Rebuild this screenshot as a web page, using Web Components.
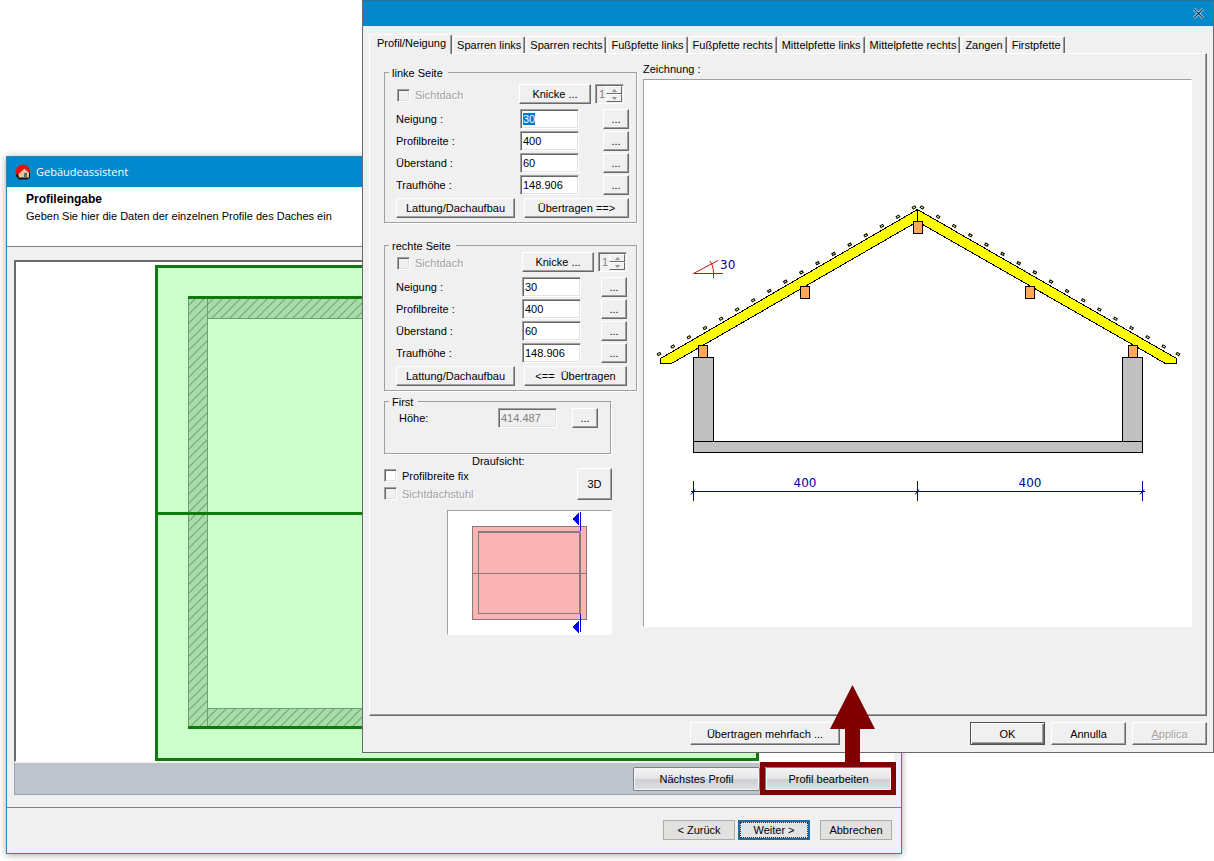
<!DOCTYPE html>
<html lang="de">
<head>
<meta charset="utf-8">
<title>Gebäudeassistent</title>
<style>
  body { margin: 0; background: #fff; font: 11px/14px "Liberation Sans", Arial, sans-serif; color: #000; }
</style>
</head>
<body>
<desktop-scene></desktop-scene>

<script>
const define = (name, html, setup) => {
  const template = document.createElement('template');
  template.innerHTML = html;
  customElements.define(name, class extends HTMLElement {
    constructor() {
      super();
      this.attachShadow({ mode: 'open' });
    }
    connectedCallback() {
      if (this.shadowRoot.childNodes.length) return;
      this.shadowRoot.append(template.content.cloneNode(true));
      if (setup) setup(this, this.shadowRoot);
    }
  });
};

/* Raised push button; kinds: primary, glossy, flat, focus */
define('push-button', `
<style>
  :host { display: block; height: 20px; }
  button { box-sizing: border-box; width: 100%; height: 100%; margin: 0; padding: 0; font: inherit; color: #000; white-space: pre;
    background: #f0f0f0; border: 1px solid; border-color: #fff #696969 #696969 #fff; box-shadow: inset -1px -1px #a0a0a0; border-radius: 0; outline: none; }
  button:disabled { color: #a0a0a0; text-shadow: 1px 1px #fff; }
  :host([kind=primary]) button { border: 1px solid #505050; box-shadow: inset 1px 1px #fff, inset -1px -1px #696969, inset -2px -2px #a0a0a0; }
  :host([kind=glossy]) button { border: 1px solid #7d8187; border-radius: 2px; box-shadow: inset 0 0 0 1px #f4f5f7;
    background: linear-gradient(#f4f4f5, #e4e5e7 48%, #cdcfd4 52%, #dfe1e5); }
  :host([kind=flat]) button { background: #e1e1df; border-color: #adada5; box-shadow: none; }
  :host([kind=focus]) button { background: #e1e3e4; border: 2px solid #22699c; box-shadow: none; outline: 1px dotted #223; outline-offset: -3px; }
</style>
<button type="button"><slot></slot></button>`,
(host, root) => {
  const button = root.querySelector('button');
  button.disabled = host.hasAttribute('disabled');
});

define('check-item', `
<style>
  :host { display: block; }
  label { display: flex; align-items: center; gap: 5px; height: 13px; }
  input { appearance: none; box-sizing: border-box; flex: none; width: 13px; height: 13px; margin: 0; background: #fff;
    border: 1px solid; border-color: #a0a0a0 #fff #fff #a0a0a0; box-shadow: inset 1px 1px #696969, inset -1px -1px #e3e3e3; }
  input:disabled { background: #f0f0f0; }
  :host([disabled]) { color: #a0a0a0; text-shadow: 1px 1px #fff; }
</style>
<label><input type="checkbox"><slot></slot></label>`,
(host, root) => { root.querySelector('input').disabled = host.hasAttribute('disabled'); });

define('spin-field', `
<style>
  :host { box-sizing: border-box; display: flex; width: 29px; height: 20px; border: 1px solid; border-color: #a0a0a0 #fff #fff #a0a0a0; box-shadow: inset 1px 1px #696969; padding: 1px; }
  input { flex: 1; min-width: 0; border: 0; padding: 0 0 0 2px; font: inherit; color: #808080; background: none; appearance: textfield; }
  input::-webkit-inner-spin-button { appearance: none; }
  span { display: flex; flex-direction: column; width: 16px; }
  button { flex: 1; min-height: 0; box-sizing: border-box; display: grid; place-items: center; padding: 0; background: #f0f0f0; border: 1px solid; border-color: #fff #696969 #696969 #fff; }
  svg { display: block; }
</style>
<input type="number" value="1" aria-label="Nummer" disabled>
<span>
  <button type="button" aria-label="mehr" disabled><svg width="5" height="3"><path d="M0 3L2.500 0L5 3z" fill="#909090"/></svg></button>
  <button type="button" aria-label="weniger" disabled><svg width="5" height="3"><path d="M0 0L2.500 3L5 0z" fill="#909090"/></svg></button>
</span>`);

/* Label, number box and "..." button on one line */
define('value-row', `
<style>
  :host { display: grid; grid-template-columns: 1fr 59px 26px; column-gap: var(--row-gap, 24px); align-items: center; height: 20px; }
  input { box-sizing: border-box; width: 100%; height: 20px; margin: 0; padding: 0 2px; font: inherit; background: #fff; color: #000; border-radius: 0; outline: none;
    border: 1px solid; border-color: #a0a0a0 #fff #fff #a0a0a0; box-shadow: inset 1px 1px #696969, inset -1px -1px #e3e3e3; }
  input:disabled { background: #f0f0f0; color: #808080; }
  input::selection { background: #0078d7; color: #fff; }
</style>
<label for="v"></label>
<input id="v" type="text">
<push-button>...</push-button>`,
(host, root) => {
  const input = root.querySelector('input');
  root.querySelector('label').textContent = host.getAttribute('label');
  input.value = host.getAttribute('value');
  input.disabled = host.hasAttribute('disabled');
  if (host.hasAttribute('selected')) { input.focus(); input.select(); }
});

define('group-box', `
<style>
  :host { display: block; }
  fieldset { margin: 0; min-width: 0; padding: 0; border: 1px solid #a0a0a0; box-shadow: 1px 1px #fff; }
  legend { margin-left: 4px; padding: 0 5px 0 3px; height: 13px; line-height: 14px; }
</style>
<fieldset><legend></legend><slot></slot></fieldset>`,
(host, root) => { root.querySelector('legend').textContent = host.getAttribute('legend'); });

/* All settings of one roof side */
define('side-group', `
<style>
  :host { display: block; }
  .body { padding: var(--top, 5px) var(--edge, 7px) 4px 11px; }
  .head { display: flex; align-items: center; gap: 4px; margin-bottom: 5px; padding-right: var(--head-edge, 5px); }
  check-item { flex: 1; padding: 2px 0 0 1px; }
  .head push-button { width: 72px; }
  .rows { display: grid; gap: 2px; }
  .actions { display: grid; grid-template-columns: 119px 1fr; gap: 9px; margin-top: 3px; }
</style>
<group-box>
  <div class="body">
    <div class="head"><check-item disabled>Sichtdach</check-item><push-button>Knicke ...</push-button><spin-field></spin-field></div>
    <div class="rows"></div>
    <div class="actions"><push-button>Lattung/Dachaufbau</push-button><push-button class="send"></push-button></div>
  </div>
</group-box>`,
(host, root) => {
  root.querySelector('group-box').shadowRoot.querySelector('legend').textContent = host.getAttribute('legend');
  root.querySelector('.send').textContent = host.getAttribute('send');
  root.querySelector('.rows').innerHTML =
    `<value-row label="Neigung :" value="30" ${host.hasAttribute('selected') ? 'selected' : ''}></value-row>` +
    '<value-row label="Profilbreite :" value="400"></value-row>' +
    '<value-row label="Überstand :" value="60"></value-row>' +
    '<value-row label="Traufhöhe :" value="148.906"></value-row>';
});

define('plan-preview', `
<style>
  :host { display: block; box-sizing: border-box; width: 165px; background: #fff; border: 1px solid; border-color: #a0a0a0 #fff #fff #a0a0a0; }
  svg { display: block; }
</style>
<svg width="163" height="123" viewBox="448 511 163 123" role="img" aria-label="Draufsicht" shape-rendering="crispEdges">
  <rect x="472.500" y="526.500" width="114" height="93" fill="#fbb4b6" stroke="#8c7878"/>
  <rect x="478.500" y="531.500" width="101" height="82" fill="none" stroke="#8c7878"/>
  <path d="M478 532.500H580.500V614M472 573.500H587" fill="none" stroke="#8c7878"/>
  <path d="M572 519L579 512V526zM572 627L579 620V634z" fill="#0000f0"/>
  <path d="M580.500 512V531M580.500 614V632" stroke="#0000c0"/>
</svg>`);

define('roof-drawing', `
<style>
  :host { display: block; background: #fff; border: 1px solid; border-color: #a0a0a0 #fff #fff #a0a0a0; }
  svg { display: block; width: 100%; height: 546px; }
  text { font: 12px "DejaVu Sans", Verdana, sans-serif; fill: #0000a8; }
</style>
<svg viewBox="644 80 547 546" role="img" aria-label="Dachprofil">
  <g shape-rendering="crispEdges" stroke="#000">
    <path d="M693.500 357.500H713.500V441.500H693.500zM1122.500 357.500H1142.500V441.500H1122.500zM693.500 441.500H1142.500V452.500H693.500z" fill="#c0c0c0"/>
    <path d="M660.500 358.500L917.500 209.500L1176.500 358.500V363.500H1165.500L917.500 221.500L671.500 363.500H660.500z" fill="#ff0"/>
    <path d="M917.500 209V222"/>
    <path d="M913.500 221.500h9v12h-9zM800.500 286.500h9v12h-9zM1025.500 286.500h9v12h-9zM698.500 345.500h9v12h-9zM1128.500 345.500h9v12h-9z" fill="#ffa858"/>
  </g>
  <g class="battens" fill="#ffffa0" stroke="#000"></g>
  <path d="M723 273.500H693.500L718 260.500M710 261C713 265 714 271 713.500 278" fill="none" stroke="#c81010"/>
  <text x="720" y="269">30</text>
  <path d="M691 491.500H1145M693.500 481V501M917.500 481V501M1142.500 481V501M691 494.500L695 489.500M915 494.500L919 489.500M1140 494.500L1144 489.500" stroke="#0000a0"/>
  <text x="805" y="487" text-anchor="middle">400</text>
  <text x="1030" y="487" text-anchor="middle">400</text>
</svg>`,
(host, root) => {
  let battens = '';
  const add = (x, y, angle) => { battens += `<rect x="-1.500" y="-1" width="3" height="2" transform="translate(${x} ${y}) rotate(${angle})"/>`; };
  add(659, 354, -30);
  add(1178, 354, 30);
  for (let i = 0; i < 16; i++) {
    add(914 - i * 16.08, 207.500 + i * 9.270, -30);
    add(922 + i * 16.120, 207.500 + i * 9.270, 30);
  }
  root.querySelector('.battens').innerHTML = battens;
});

define('tab-strip', `
<style>
  :host { display: block; }
  div { display: flex; align-items: flex-end; height: 19px; }
  button { box-sizing: border-box; height: 17px; margin: 0 0 0 1px; padding: 0 3px; font: inherit; white-space: nowrap; color: #000; background: #f0f0f0;
    border: 1px solid; border-color: #fff #696969 transparent #fff; border-bottom: 0; box-shadow: inset -1px 0 #a0a0a0; border-radius: 2px 2px 0 0; }
  button[aria-selected=true] { position: relative; height: 20px; margin: 0 0 -1px; padding: 0 5px 3px 7px; }
</style>
<div role="tablist">
  <button role="tab" aria-selected="true">Profil/Neigung</button>
  <button role="tab">Sparren links</button>
  <button role="tab">Sparren rechts</button>
  <button role="tab">Fußpfette links</button>
  <button role="tab">Fußpfette rechts</button>
  <button role="tab">Mittelpfette links</button>
  <button role="tab">Mittelpfette rechts</button>
  <button role="tab">Zangen</button>
  <button role="tab">Firstpfette</button>
</div>`);

define('profile-dialog', `
<style>
  :host { display: block; box-sizing: border-box; background: #f0f0f0; border: 1px solid #696969; border-top-color: #2f6f8f; }
  header { display: flex; justify-content: flex-end; align-items: center; height: 25px; margin-bottom: 8px; padding-right: 8px; background: #0288c8; }
  header button { display: grid; place-items: center; width: 14px; height: 14px; padding: 0; border: 0; background: none; }
  main { margin: 0 6px; }
  .panel { display: grid; grid-template-columns: 259px 1fr; border: 1px solid; border-color: #fff #696969 #696969 #fff; box-shadow: inset -1px -1px #a0a0a0; padding: 8px 14px 80px; }
  .left { padding-top: 4px; }
  .left > side-group { width: 253px; }
  .right-side { margin-top: 16px; --top: 0px; --edge: 9px; --head-edge: 0px; --row-gap: 20px; }
  .ridge { width: 227px; margin-top: 4px; --row-gap: 15px; }
  .ridge div { padding: 0 12px 25px 14px; }
  .below { width: 228px; }
  .caption { padding-left: 88px; }
  .options { display: flex; justify-content: space-between; height: 32px; margin-bottom: 10px; }
  .checks { display: grid; gap: 5px; align-content: end; }
  .options push-button { width: 35px; height: 32px; }
  plan-preview { margin-left: auto; }
  .right { min-width: 0; }
  .right p { margin: 0 0 3px; }
  footer { display: flex; justify-content: flex-end; gap: 6px; padding: 6px 6px 7px; }
  footer push-button { width: 75px; height: 23px; }
  footer .multi { width: 150px; margin-right: 124px; }
</style>
<header><button type="button" aria-label="Schließen"><svg width="11" height="11"><path d="M1 1L10 10M10 1L1 10" stroke="#d8ecf6" stroke-width="2.500"/><path d="M1 1L10 10M10 1L1 10" stroke="#0a3850" stroke-width="1.200"/></svg></button></header>
<main>
  <tab-strip></tab-strip>
  <section class="panel">
    <div class="left">
      <side-group legend="linke Seite" send="Übertragen ==>" selected></side-group>
      <side-group class="right-side" legend="rechte Seite" send="<==  Übertragen"></side-group>
      <group-box class="ridge" legend="First"><div><value-row label="Höhe:" value="414.487" disabled></value-row></div></group-box>
      <div class="below">
        <div class="caption">Draufsicht:</div>
        <div class="options">
          <div class="checks"><check-item>Profilbreite fix</check-item><check-item disabled>Sichtdachstuhl</check-item></div>
          <push-button>3D</push-button>
        </div>
        <plan-preview></plan-preview>
      </div>
    </div>
    <div class="right"><p>Zeichnung :</p><roof-drawing></roof-drawing></div>
  </section>
</main>
<footer>
  <push-button class="multi">Übertragen mehrfach ...</push-button>
  <push-button kind="primary">OK</push-button>
  <push-button>Annulla</push-button>
  <push-button disabled><u>A</u>pplica</push-button>
</footer>`);

define('floor-plan', `
<style>
  :host { display: block; background: #fff; border: 2px solid; border-color: #6a6a70 #fff #fff #6a6a70; border-width: 2px 1px 1px 2px; }
  svg { display: block; width: 100%; height: 499px; }
</style>
<svg role="img" aria-label="Grundriss">
  <defs><pattern id="hatch" width="9" height="9" patternUnits="userSpaceOnUse"><rect width="9" height="9" fill="#a8dca8"/><path d="M-1 10L10 -1M-1 1L1 -1M8 10L10 8" stroke="#78a878" stroke-width="1.200"/></pattern></defs>
  <rect x="140.500" y="4.500" width="601" height="493" fill="#ccffcc" stroke="#107a10" stroke-width="3"/>
  <rect x="172" y="36" width="540" height="429" fill="url(#hatch)"/>
  <rect x="191.500" y="56.500" width="500" height="390" fill="#ccffcc" stroke="#6f9f6f"/>
  <path d="M191.500 37V465M172.500 37V465" stroke="#6f9f6f"/>
  <path d="M172 35.500H712M172 465.500H712M142 251.500H742" stroke="#107a10" stroke-width="3"/>
</svg>`);

define('assistant-window', `
<style>
  :host { display: block; box-sizing: border-box; background: #f0f0f0; border: 1px solid #2e86b8; box-shadow: 0 1px 7px #00000058; }
  .title { display: flex; align-items: center; gap: 5px; height: 30px; padding-left: 8px; background: #0288cc; color: #fff; font: 11px/16px "Open Sans", "Noto Sans", sans-serif; }
  header { height: 54px; padding: 5px 18px 0 19px; background: #fff; border-bottom: 1px solid #808080; }
  h1 { margin: 0; font-size: 12px; line-height: 14px; }
  p { margin: 3px 0 0; }
  main { padding: 13px 7px 12px; border-bottom: 1px solid #808080; }
  .bar { display: flex; justify-content: flex-end; gap: 5px; margin-top: 1px; padding: 4px 2px 3px; background: #bfc3cb; border: 0 solid #a0a4aa; border-width: 0 0 1px 1px; }
  .bar push-button { width: 127px; height: 24px; }
  footer { display: flex; justify-content: flex-end; gap: 3px; padding: 12px 9px 13px; }
  footer push-button { width: 72px; }
  footer push-button:last-child { margin-left: 7px; }
</style>
<div class="title">
  <svg width="16" height="16" aria-hidden="true"><path d="M2 9H15V14L12 15.500H4L1 12z" fill="#181010"/><path d="M3 9L9 4L14 9V13.500H4z" fill="#f4c090"/><path d="M0.500 9C0.500 4 4 0.500 8 0.500C12 0.500 15 4 15.500 8.500H14L9.500 4.500L3.500 10H1z" fill="#e81010"/><path d="M9 9H12V14H9z" fill="#667"/></svg>
  <span>Gebäudeassistent</span>
</div>
<header><h1>Profileingabe</h1><p>Geben Sie hier die Daten der einzelnen Profile des Daches ein</p></header>
<main>
  <floor-plan></floor-plan>
  <div class="bar"><push-button kind="glossy">Nächstes Profil</push-button><push-button kind="glossy">Profil bearbeiten</push-button></div>
</main>
<footer><push-button kind="flat">&lt; Zurück</push-button><push-button kind="focus">Weiter &gt;</push-button><push-button kind="flat">Abbrechen</push-button></footer>`);

/* Two overlapping windows and the callout that links them */
define('desktop-scene', `
<style>
  :host { display: block; position: relative; min-height: 100vh; overflow: hidden; }
  assistant-window { position: absolute; top: 156px; left: 6px; right: 312px; }
  profile-dialog { position: absolute; top: 0; left: 362px; right: 0; }
  svg { position: absolute; top: 685px; right: 318px; pointer-events: none; }
</style>
<assistant-window></assistant-window>
<profile-dialog></profile-dialog>
<svg width="136" height="110" aria-hidden="true"><path d="M92.500 0L115 44H100V80H85V44H70z" fill="#7f0000"/><rect x="2.500" y="79.500" width="131" height="28" fill="none" stroke="#7f0000" stroke-width="5"/></svg>`);
</script>
</body>
</html>
